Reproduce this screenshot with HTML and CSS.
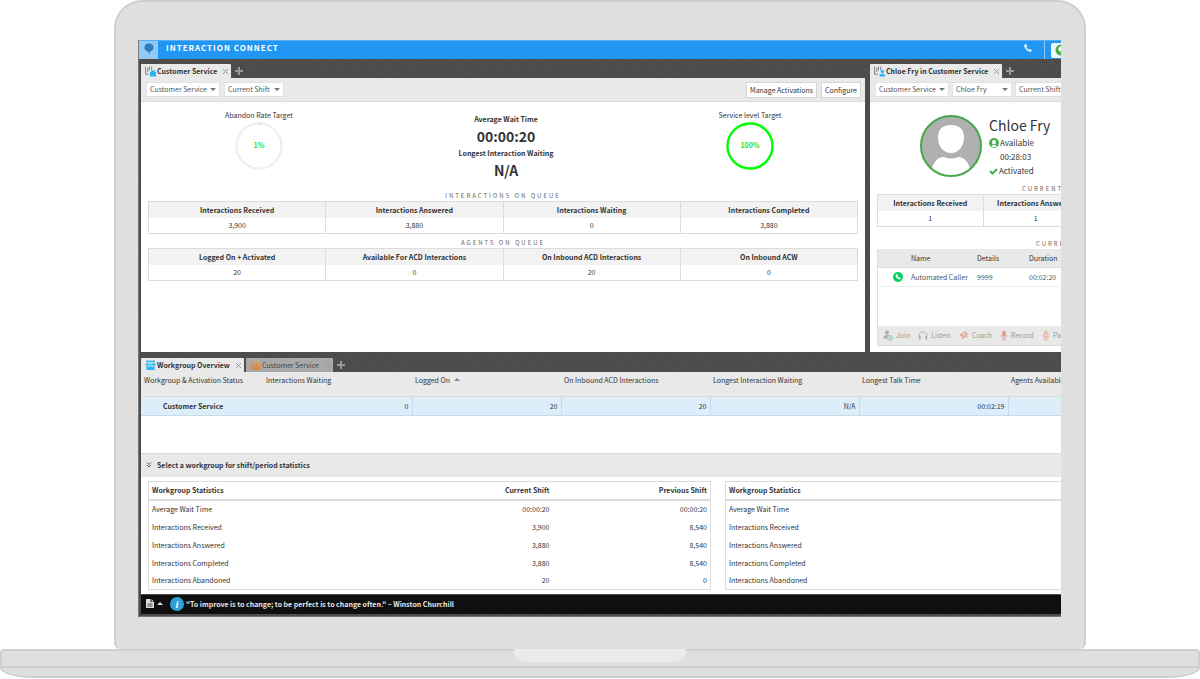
FILE: index.html
```html
<!DOCTYPE html>
<html lang="en">
<head>
<meta charset="utf-8">
<title>Interaction Connect</title>
<link rel="stylesheet" href="styles.css">
</head>
<body>
<svg class="defs" width="0" height="0" aria-hidden="true">
  <symbol id="phone" viewBox="0 0 24 24"><path d="M6.600 2 2.800 4.600c-1.300 5.500 7.200 16.500 15.700 17.200l3.200-3.600-5-4.300-3 2.100c-2.200-1-4.700-4-5.300-6.200L10.500 7z"/></symbol>
  <symbol id="board" viewBox="0 0 20 20"><path d="M1 1v14h6M5 3v8M8 1v7M12 1v6" fill="none" stroke="#6a7680" stroke-width="1.600"/></symbol>
</svg>
<div class="laptop">
  <div class="lid">
    <main class="screen">
      <header class="topbar">
        <span class="brand"><svg width="10" height="12" viewBox="0 0 20 24"><path d="M10 1c6 0 9 4 9 8 0 5-4 7-7 8l-1 6-3-6C4 16 1 13 1 9s3-8 9-8z" fill="#2a79b5"/><path d="M5 9c2-5 9-4 9 0s-5 4-6 2" fill="none" stroke="#3f8dc6" stroke-width="1.500"/></svg></span>
        <h1>INTERACTION CONNECT</h1>
        <button class="call" aria-label="Call"><svg width="10" height="10"><use href="#phone"/></svg></button>
        <button class="status" aria-label="Status"><svg width="12" height="12" viewBox="0 0 24 24"><circle cx="12" cy="12" r="11" fill="#4caf50"/><circle cx="12" cy="10" r="5" fill="#fff"/></svg></button>
      </header>
      <div class="upper">
        <section class="pane">
          <nav class="tabs">
            <div class="tab">
              <svg width="11" height="11" viewBox="0 0 20 20"><use href="#board"/><path d="M9 11h11v8H9zM11 8h7v4h-7z" fill="#29b6f6"/></svg>
              <a href="#">Customer Service</a><button class="close" aria-label="Close tab"></button>
            </div>
            <button class="add" aria-label="Add tab"></button>
          </nav>
          <div class="panel">
            <div class="toolbar">
              <label class="pick wide"><select aria-label="Workgroup"><option>Customer Service</option></select></label>
              <label class="pick"><select aria-label="Period"><option>Current Shift</option></select></label>
              <span class="spacer"></span>
              <button class="btn">Manage Activations</button>
              <button class="btn">Configure</button>
            </div>
            <div class="summary">
              <div class="target">
                <span>Abandon Rate Target</span>
                <svg width="48" height="48" viewBox="0 0 48 48"><circle cx="24" cy="24" r="22.500" fill="none" stroke="#eee" stroke-width="2.200"/><path d="M24 1.500h1" stroke="#7dee8d" stroke-width="2"/><text x="24" y="26" text-anchor="middle">1%</text></svg>
              </div>
              <dl class="waits">
                <dt>Average Wait Time</dt><dd>00:00:20</dd>
                <dt>Longest Interaction Waiting</dt><dd>N/A</dd>
              </dl>
              <div class="target">
                <span>Service level Target</span>
                <svg width="48" height="48" viewBox="0 0 48 48"><circle cx="24" cy="24" r="22.500" fill="none" stroke="#0f0" stroke-width="2.400"/><text x="24" y="26" text-anchor="middle">100%</text></svg>
              </div>
            </div>
            <h2>INTERACTIONS ON QUEUE</h2>
            <table class="counts">
              <thead><tr><th>Interactions Received</th><th>Interactions Answered</th><th>Interactions Waiting</th><th>Interactions Completed</th></tr></thead>
              <tbody><tr><td>3,900</td><td>3,880</td><td>0</td><td>3,880</td></tr></tbody>
            </table>
            <h2>AGENTS ON QUEUE</h2>
            <table class="counts">
              <thead><tr><th>Logged On + Activated</th><th>Available For ACD Interactions</th><th>On Inbound ACD Interactions</th><th>On Inbound ACW</th></tr></thead>
              <tbody><tr><td>20</td><td>0</td><td>20</td><td>0</td></tr></tbody>
            </table>
          </div>
        </section>
        <section class="pane agent">
          <nav class="tabs">
            <div class="tab">
              <svg width="11" height="11" viewBox="0 0 20 20"><use href="#board"/><circle cx="15" cy="10" r="3" fill="#29b6f6"/><path d="M10 19v-3l3-2h4l3 2v3z" fill="#29b6f6"/></svg>
              <a href="#">Chloe Fry in Customer Service</a><button class="close" aria-label="Close tab"></button>
            </div>
            <button class="add" aria-label="Add tab"></button>
          </nav>
          <div class="panel">
            <div class="toolbar">
              <label class="pick wide"><select aria-label="Workgroup"><option>Customer Service</option></select></label>
              <label class="pick"><select aria-label="Agent"><option>Chloe Fry</option></select></label>
              <label class="pick"><select aria-label="Period"><option>Current Shift</option></select></label>
            </div>
            <div class="profile">
              <svg width="62" height="62" viewBox="0 0 62 62"><defs><clipPath id="face"><circle cx="31" cy="31" r="29"/></clipPath></defs><circle cx="31" cy="31" r="30" fill="#b0b0b0" stroke="#45a94a" stroke-width="2"/><g clip-path="url(#face)" fill="#fff"><path d="M31 10c8 0 13 4 13 12 0 9-5 16-13 16s-13-7-13-16c0-8 5-12 13-12z"/><path d="M11 60c1-13 7-18 13-18 5 2 9 2 14 0 6 0 12 5 13 18z"/></g></svg>
              <div class="who">
                <h3>Chloe Fry</h3>
                <p><svg width="10" height="10" viewBox="0 0 20 20"><circle cx="10" cy="10" r="10" fill="#4caf50"/><path d="M10 4c3 0 4 2 4 4 0 3-2 5-4 5s-4-2-4-5c0-2 1-4 4-4zM5 18c1-4 3-4 5-4s4 0 5 4z" fill="#fff"/></svg>Available</p>
                <p class="time">00:28:03</p>
                <p><svg width="9" height="8" viewBox="0 0 18 16"><path d="m2 8 5 5 9-9" fill="none" stroke="#4caf50" stroke-width="4"/></svg>Activated</p>
              </div>
            </div>
            <h2 class="first">CURRENT</h2>
            <table class="counts">
              <thead><tr><th>Interactions Received</th><th>Interactions Answered</th></tr></thead>
              <tbody><tr><td>1</td><td>1</td></tr></tbody>
            </table>
            <h2 class="second">CURRENT</h2>
            <div class="calls">
              <table>
                <thead><tr><th></th><th>Name</th><th>Details</th><th>Duration</th></tr></thead>
                <tbody><tr><td><svg width="10" height="10" viewBox="0 0 20 20"><circle cx="10" cy="10" r="10" fill="#00d15b"/><path d="M7 4 5 6c0 4 4 9 9 9l2-3-3-2-2 1-2-3 1-2z" fill="#fff"/></svg></td><td>Automated Caller</td><td>9999</td><td>00:02:20</td></tr></tbody>
              </table>
              <div class="actions">
                <button><svg width="10" height="11" viewBox="0 0 20 22"><circle cx="8" cy="5" r="4" fill="#667"/><path d="M1 17v-4l4-3h6l4 3-4 4z" fill="#667"/><circle cx="14" cy="16" r="5" fill="#e9e9e9" stroke="#22b357" stroke-width="2"/><path d="M14 13v6M11 16h6" stroke="#22b357" stroke-width="2"/></svg>Join</button>
                <button><svg width="10" height="11" viewBox="0 0 22 22"><path d="M3 17V9c0-8 16-8 16 0v8" fill="none" stroke="#667" stroke-width="2"/><path d="M2 12h4v8H2zM16 12h4v8h-4z" fill="#667"/></svg>Listen</button>
                <button><svg width="10" height="10" viewBox="0 0 22 20"><path d="M1 9 15 1l4 15-8-2v5H7l-1-6H2zM17 4l4 3-3 4z" fill="#f0603c"/><path d="m8 9 5-3v6z" fill="#e9e9e9"/></svg>Coach</button>
                <button><svg width="8" height="11" viewBox="0 0 18 22"><rect x="5" width="8" height="14" rx="4" fill="#e8311b"/><path d="M2 10c0 9 14 9 14 0M9 16v4M5 21h8" fill="none" stroke="#a66" stroke-width="2"/></svg>Record</button>
                <button><svg width="8" height="11" viewBox="0 0 18 22"><rect x="5" y="1" width="8" height="13" rx="4" fill="none" stroke="#f0603c" stroke-width="2"/><path d="M2 10c0 9 14 9 14 0M9 16v4M5 21h8M8 4v6M11 4v6" fill="none" stroke="#f0603c" stroke-width="2"/></svg>Pause</button>
              </div>
            </div>
          </div>
        </section>
      </div>
      <section class="lower">
        <nav class="tabs">
          <div class="tab">
            <svg width="11" height="11" viewBox="0 0 22 22" fill="#29b6f6"><circle cx="5" cy="3" r="2.500"/><circle cx="11" cy="3" r="2.500"/><circle cx="17" cy="3" r="2.500"/><path d="M1 7h6l2 2 2-2 2 2 2-2h6v4H1zM3 12h4v2h3v-2h3v2h3v-2h3v8H3z"/></svg>
            <a href="#">Workgroup Overview</a><button class="close" aria-label="Close tab"></button>
          </div>
          <div class="tab off">
            <svg width="11" height="11" viewBox="0 0 22 22"><path d="M2 4v16" fill="none" stroke="#db8a42" stroke-width="2"/><path d="M6 6h15v14H6z" fill="#db8a42"/><path d="M9 7V2h3v5M15 7V2h3v5M10 8v5M17 8v5" fill="none" stroke="#e6a162" stroke-width="2"/></svg>
            <a href="#">Customer Service</a><button class="close" aria-label="Close tab"></button>
          </div>
          <button class="add" aria-label="Add tab"></button>
        </nav>
        <div class="overview">
          <table>
            <colgroup><col class="lead"><col><col><col><col><col><col></colgroup>
            <thead><tr><th>Workgroup &amp; Activation Status</th><th>Interactions Waiting</th><th>Logged On <span class="up"></span></th><th>On Inbound ACD Interactions</th><th>Longest Interaction Waiting</th><th>Longest Talk Time</th><th>Agents Available</th></tr></thead>
            <tbody><tr><td class="name">Customer Service</td><td>0</td><td>20</td><td>20</td><td>N/A</td><td>00:02:19</td><td></td></tr></tbody>
          </table>
        </div>
        <button class="fold"><svg width="6" height="6" viewBox="0 0 12 12"><path d="m2 1 4 4 4-4M2 6l4 4 4-4" fill="none" stroke="#444" stroke-width="1.800"/></svg>Select a workgroup for shift/period statistics</button>
        <div class="stats">
          <table>
            <thead><tr><th>Workgroup Statistics</th><th>Current Shift</th><th>Previous Shift</th></tr></thead>
            <tbody>
              <tr><td>Average Wait Time</td><td>00:00:20</td><td>00:00:20</td></tr>
              <tr><td>Interactions Received</td><td>3,900</td><td>8,540</td></tr>
              <tr><td>Interactions Answered</td><td>3,880</td><td>8,540</td></tr>
              <tr><td>Interactions Completed</td><td>3,880</td><td>8,540</td></tr>
              <tr><td>Interactions Abandoned</td><td>20</td><td>0</td></tr>
            </tbody>
          </table>
          <table class="cut">
            <thead><tr><th>Workgroup Statistics</th></tr></thead>
            <tbody>
              <tr><td>Average Wait Time</td></tr>
              <tr><td>Interactions Received</td></tr>
              <tr><td>Interactions Answered</td></tr>
              <tr><td>Interactions Completed</td></tr>
              <tr><td>Interactions Abandoned</td></tr>
            </tbody>
          </table>
        </div>
      </section>
      <footer class="quote">
        <button class="doc" aria-label="Notes"><svg width="8" height="9" viewBox="0 0 16 18"><path d="M0 0h9v6h7v12H0z" fill="#ddd"/><path d="m11 0 5 5h-5z" fill="#ddd"/><path d="M3 10h10M3 14h10" stroke="#111" stroke-width="1.500"/></svg><span class="up"></span></button>
        <span class="info">i</span>
        <span>"To improve is to change; to be perfect is to change often." – Winston Churchill</span>
      </footer>
    </main>
  </div>
  <div class="deck"><div class="notch"></div></div>
  <div class="foot"></div>
</div>
</body>
</html>
```
FILE: styles.css
```css
:root {
  --xs: 7px;
  --lg: 14px;
  --ink: #333;
  --line: #dcdcdc;
  --bar: #e9e9e9;
  --shell: #dfdfdf;
  --edge: #cfcfcf;
}
* { box-sizing: border-box; }
body {
  margin: 0;
  background: #fff;
  color: var(--ink);
  font: var(--xs)/10px "Noto Sans CJK SC", "Noto Sans", sans-serif;
  white-space: nowrap;
}
h1, h2, h3, p, dl, dd { margin: 0; }
button, select { font: inherit; color: inherit; border: 0; padding: 0; background: none; white-space: nowrap; }
a { color: inherit; text-decoration: none; }
table { border-collapse: collapse; table-layout: fixed; width: 100%; }
th, td { padding: 0; }
svg { flex: none; display: block; }
.defs { position: absolute; }

/* Laptop shell */
.lid {
  margin: 0 auto;
  width: 81%;
  padding: 38px 23px 32px 22px;
  background: var(--shell);
  border: 2px solid var(--edge);
  border-bottom: 0;
  border-radius: 28px 28px 6px 6px;
}
.deck {
  display: flex;
  justify-content: center;
  height: 19px;
  background: var(--shell);
  border: 2px solid var(--edge);
  border-radius: 4px 4px 0 0;
}
.notch { width: 172px; height: 13px; margin-top: -2px; background: #ebebeb; border-radius: 0 0 12px 12px; }
.foot {
  height: 10px;
  background: var(--shell);
  border: solid var(--edge);
  border-width: 0 2px 2px;
  border-radius: 0 0 34px 34px / 0 0 10px 10px;
}
.screen {
  display: flex;
  flex-direction: column;
  overflow: hidden;
  border-left: 1px solid #777;
  border-bottom: 1px solid #777;
  background: repeating-linear-gradient(45deg, #525252 0 1px, #4a4a4a 1px 3px);
}

/* Top bar */
.topbar {
  display: flex;
  align-items: center;
  height: 19px;
  background: #2196f3;
  border-top: 1px solid #56aff6;
  color: #fff;
}
.brand { display: flex; align-items: center; justify-content: center; width: 19px; height: 100%; padding-bottom: 3px; background: #90caf9; }
.topbar h1 { flex: 1; padding: 0 0 4px 8px; font-size: 8px; line-height: 10px; letter-spacing: 1px; }
.call { width: 34px; height: 100%; padding: 0 12px 4px; border-right: 1px solid #90caf9; fill: #dceefc; }
.status { width: 10px; height: 15px; margin-left: 6px; overflow: hidden; padding-left: 4px; background: #eef7fe; border-radius: 2px 0 0 2px; }

/* Tabs */
.tabs { display: flex; height: 19px; align-items: flex-end; gap: 2px; }
.lower .tabs { height: 20px; }
.tab { display: flex; align-items: center; height: 14px; padding: 0 3px 0 4px; gap: 1px; background: var(--bar); border-radius: 1px 1px 0 0; font-weight: 700; }
.tab.off { background: #a9a9a9; color: #444; font-weight: 400; }
.close {
  width: 5px;
  height: 5px;
  margin: 1px 0 0 5px;
  background:
    linear-gradient(45deg, transparent 44%, #999 44% 56%, transparent 56%),
    linear-gradient(-45deg, transparent 44%, #999 44% 56%, transparent 56%);
}
.add { width: 8px; height: 8px; margin: 0 0 3px 2px; background: linear-gradient(#999, #999) center/8px 2px no-repeat, linear-gradient(#999, #999) center/2px 8px no-repeat; }

/* Upper panes */
.upper { display: flex; gap: 5px; padding-left: 2px; }
.pane { flex: 724 0 0; min-width: 0; }
.agent { flex: 191 0 0; }
.panel { height: 274px; overflow: hidden; background: #fff; }
.toolbar { display: flex; align-items: center; gap: 4px; height: 24px; padding: 0 4px 0 5px; background: var(--bar); border-bottom: 1px solid var(--line); }
.spacer { flex: 1; }
.pick { position: relative; flex: none; width: 60px; height: 15px; background: #fff; border: 1px solid #e2e2e2; }
.pick.wide { width: 74px; }
.pick select { display: block; width: 100%; height: 100%; padding: 0 3px; appearance: none; line-height: 13px; color: #555; }
.pick::after { content: ""; position: absolute; right: 3px; top: 5px; border: solid transparent; border-width: 3px 3px 0; border-top-color: #777; pointer-events: none; }
.btn { height: 16px; padding: 0 3px; background: #fff; border: 1px solid #d5d5d5; }
.summary { display: grid; grid-template-columns: 236fr 258fr 230fr; padding-top: 8px; height: 89px; text-align: center; }
.target { display: flex; flex-direction: column; align-items: center; gap: 2px; }
.target text { fill: #0de62d; font-size: 7px; font-weight: 700; }
.waits { padding-top: 4px; }
.waits dt { font-weight: 700; }
.waits dd { font-size: var(--lg); line-height: 24px; font-weight: 700; }
h2 { height: 10px; font-size: 6px; line-height: 10px; font-weight: 400; letter-spacing: 2px; text-align: center; color: #666; }
.counts { width: calc(100% - 14px); margin: 0 7px 4px; border: 1px solid var(--line); }
.counts th { height: 16px; background: #f2f2f2; border-right: 1px solid var(--line); }
.counts td { height: 16px; text-align: center; border-right: 1px solid var(--line); }

/* Agent pane */
.agent .toolbar { gap: 3px; }
.profile { display: flex; gap: 7px; height: 82px; padding: 13px 0 0 50px; }
.who h3 { font-size: var(--lg); line-height: 21px; font-weight: 400; }
.who p { display: flex; align-items: center; gap: 1px; font-size: 8px; line-height: 14px; }
.who .time { padding-left: 11px; }
.agent h2 { text-align: left; }
.agent .first { padding-left: 152px; }
.agent .second { padding: 0 0 0 166px; margin-top: 12px; }
.agent .counts { width: 212px; }
.calls { margin-left: 7px; width: 212px; border: 1px solid var(--line); border-top: 0; }
.calls th { height: 18px; text-align: left; font-weight: 400; background: var(--bar); border-bottom: 1px solid var(--line); }
.calls td { height: 19px; border-bottom: 1px solid #eee; color: #555; }
.calls th:nth-child(1) { width: 33px; }
.calls th:nth-child(2) { width: 66px; }
.calls th:nth-child(3) { width: 52px; }
.calls td svg { margin-left: 15px; }
.actions { display: flex; align-items: center; gap: 8px; height: 19px; margin-top: 39px; padding-left: 5px; background: var(--bar); }
.actions button { display: flex; align-items: center; gap: 3px; opacity: .45; }

/* Workgroup overview */
.lower { padding-left: 2px; }
.overview { height: 81px; overflow: hidden; background: #fff; }
.overview table { width: 1016px; }
.overview col { width: 149px; }
.overview .lead { width: 122px; }
.overview th { height: 24px; padding: 3px 3px 0; vertical-align: top; text-align: left; font-weight: 400; background: var(--bar); border-bottom: 1px solid var(--line); }
.overview td { height: 19px; padding: 0 3px; text-align: right; background: #dceefa; border-right: 1px solid #c5dbe9; border-bottom: 1px solid #c5dbe9; }
.overview .name { padding-left: 22px; text-align: left; font-weight: 700; border-right: 0; }
.up { display: inline-block; border: solid transparent; border-width: 0 3px 3px; border-bottom-color: #888; margin: 0 0 2px 2px; }
.fold { display: flex; align-items: center; gap: 5px; width: 100%; height: 24px; padding: 0 0 2px 5px; background: var(--bar); border-top: 1px solid var(--line); font-weight: 700; }
.stats { display: grid; grid-template-columns: 563fr 336fr; gap: 14px; height: 117px; padding: 4px 0 0 7px; background: #fff; align-items: start; }
.stats table { border: 1px solid var(--line); }
.stats .cut { border-right: 0; }
.stats th { height: 18px; padding: 0 3px; text-align: right; border-bottom: 2px solid var(--line); }
.stats td { height: 18px; padding: 0 3px; text-align: right; }
.stats th:first-child, .stats td:first-child { text-align: left; }
.stats th:nth-child(2) { width: 160px; }
.stats th:nth-child(3) { width: 158px; }

/* Quote bar */
.quote { display: flex; align-items: center; gap: 2px; height: 19px; margin: 1px 0 2px 2px; padding: 0 0 2px 5px; background: #0f0f0f; color: #e5e5e5; font-weight: 700; }
.doc { display: flex; align-items: center; gap: 1px; width: 22px; }
.doc .up { margin: 0 0 0 2px; border-bottom-color: #ddd; }
.info { width: 14px; height: 14px; border-radius: 50%; background: #2f9fd8; color: #fff; text-align: center; font: italic 700 11px/14px "Liberation Serif", serif; }
```
